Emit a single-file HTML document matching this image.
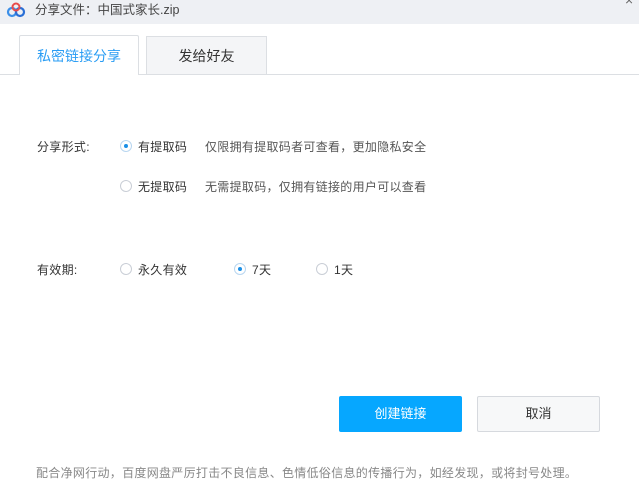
<!DOCTYPE html><html><head><meta charset="utf-8"><style>
body{margin:0;width:639px;height:496px;background:#fff;position:relative;overflow:hidden;font-family:"Liberation Sans","Noto Sans CJK SC",sans-serif;color:#333;font-size:12px;letter-spacing:.3px}
.a{position:absolute;white-space:nowrap}
.title{left:0;top:0;width:639px;height:24px;background:#eef0f4}
.r{position:absolute;width:12px;height:12px;border:1px solid #c9ced6;border-radius:50%;box-sizing:border-box;background:#fff}
.r.on{border-color:#b8d6f0}.r.on::after{content:"";position:absolute;left:3px;top:3px;width:4px;height:4px;border-radius:50%;background:#1a8fe6}
</style></head><body>
<div class="a title"></div>
<svg class="a" style="left:6px;top:2px" width="20" height="16" viewBox="0 0 20 16"><circle cx="6" cy="10" r="4" fill="none" stroke="#3b8fe8" stroke-width="2.2"/><circle cx="14" cy="10" r="4" fill="none" stroke="#2a6fd6" stroke-width="2.2"/><circle cx="10" cy="5" r="3.5" fill="none" stroke="#e84a4a" stroke-width="2"/></svg>
<div class="a" style="left:35px;top:-1px;font-size:12.5px;color:#444;letter-spacing:0">分享文件：中国式家长.zip</div>
<div class="a" style="left:625px;top:-8px;font-size:14px;color:#666">×</div>
<div class="a" style="left:0;top:74px;width:639px;height:1px;background:#dcdfe3"></div>
<div class="a" style="left:19px;top:35px;width:120px;height:40px;box-sizing:border-box;border:1px solid #dcdfe3;border-bottom:none;background:#fff;border-radius:2px 2px 0 0;text-align:center;line-height:40px;font-size:14px;color:#2a9df4;letter-spacing:0">私密链接分享</div>
<div class="a" style="left:146px;top:36px;width:121px;height:38px;box-sizing:border-box;border:1px solid #dcdfe3;border-bottom:none;background:#f4f5f7;text-align:center;line-height:38px;font-size:14px;color:#333;letter-spacing:0">发给好友</div>
<div class="a" style="left:37px;top:138px">分享形式:</div>
<div class="r on" style="left:120px;top:140px"></div>
<div class="a" style="left:138px;top:138px">有提取码</div>
<div class="a" style="left:205px;top:138px;color:#555">仅限拥有提取码者可查看，更加隐私安全</div>
<div class="r" style="left:120px;top:180px"></div>
<div class="a" style="left:138px;top:178px">无提取码</div>
<div class="a" style="left:205px;top:178px;color:#555">无需提取码，仅拥有链接的用户可以查看</div>
<div class="a" style="left:37px;top:261px">有效期:</div>
<div class="r" style="left:120px;top:263px"></div>
<div class="a" style="left:138px;top:261px">永久有效</div>
<div class="r on" style="left:234px;top:263px"></div>
<div class="a" style="left:252px;top:261px">7天</div>
<div class="r" style="left:316px;top:263px"></div>
<div class="a" style="left:334px;top:261px">1天</div>
<div class="a" style="left:339px;top:396px;width:123px;height:36px;background:#06a7ff;border-radius:2px;color:#fff;text-align:center;line-height:36px;font-size:13px;letter-spacing:0">创建链接</div>
<div class="a" style="left:477px;top:396px;width:123px;height:36px;box-sizing:border-box;border:1px solid #d6d9de;background:#f7f8f9;border-radius:2px;text-align:center;line-height:34px;font-size:13px;color:#333;letter-spacing:0">取消</div>
<div class="a" style="left:36px;top:464px;color:#888">配合净网行动，百度网盘严厉打击不良信息、色情低俗信息的传播行为，如经发现，或将封号处理。</div>
</body></html>
